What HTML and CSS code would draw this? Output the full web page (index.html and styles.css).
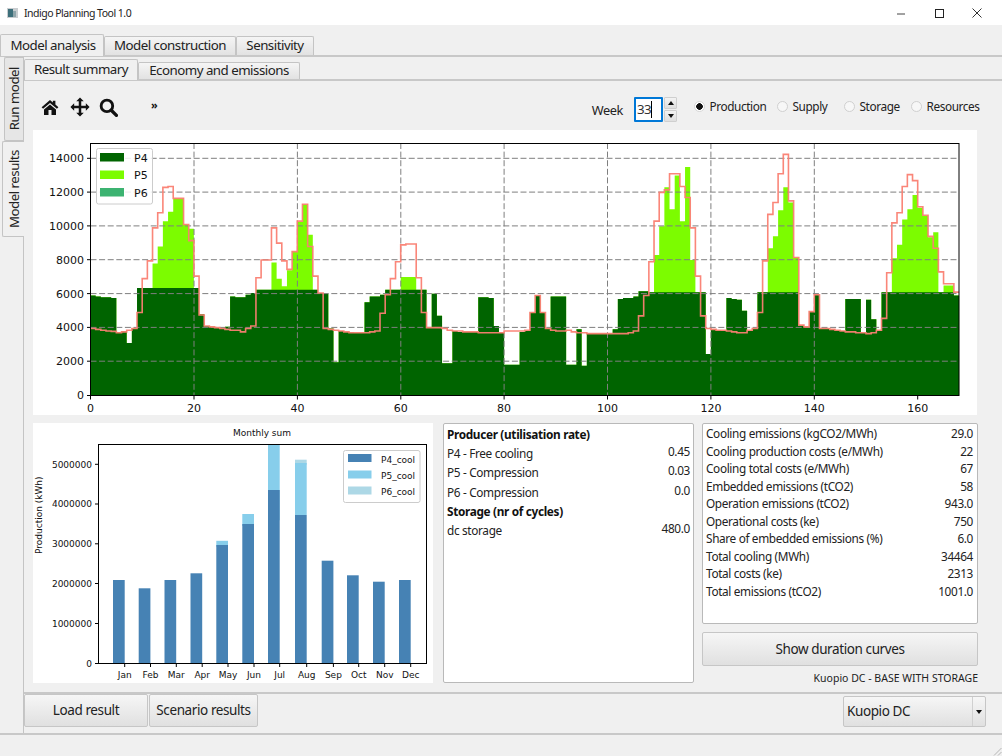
FILE: index.html
```html
<!DOCTYPE html>
<html lang="en">
<head>
<meta charset="utf-8">
<title>Indigo Planning Tool 1.0</title>
<link rel="stylesheet" href="styles.css">
</head>
<body>
<div class="window">
  <header class="titlebar">
    <div class="app-title">
      <svg class="app-icon" width="11" height="10" viewBox="0 0 11 10"><rect width="11" height="10" fill="#c9cdd0"/><rect x="1" y="1" width="5" height="8" fill="#3d6f7a"/><rect x="6" y="3" width="3" height="6" fill="#8fa5aa"/></svg>
      <span>Indigo Planning Tool 1.0</span>
    </div>
    <div class="win-controls">
      <svg width="10" height="10" viewBox="0 0 10 10"><path d="M1 6h8" stroke="#444" fill="none"/></svg>
      <svg width="10" height="10" viewBox="0 0 10 10"><rect x="1.500" y="1.500" width="8" height="8" stroke="#222" fill="none"/></svg>
      <svg width="10" height="10" viewBox="0 0 10 10"><path d="M.5.5l9 9M9.500.5l-9 9" stroke="#333" fill="none"/></svg>
    </div>
  </header>

  <nav class="outer-tabs">
    <div class="tab tab-active tab-outer-first">Model analysis</div>
    <div class="tab tab-construction">Model construction</div>
    <div class="tab tab-sensitivity">Sensitivity</div>
  </nav>

  <div class="outer-pane">
    <nav class="side-tabs">
      <div class="side-tab side-run"><span>Run model</span></div>
      <div class="side-tab side-results"><span>Model results</span></div>
    </nav>
    <div class="side-pane">
      <nav class="inner-tabs">
        <div class="tab tab-active tab-summary">Result summary</div>
        <div class="tab tab-economy">Economy and emissions</div>
      </nav>
      <section class="inner-pane">
        <div class="toolbar">
          <div class="tool-icons">
            <svg class="tool" width="18" height="18" viewBox="0 0 24 24"><path d="M12 2.500 .8 12.200l2 2.100L12 6.500l9.200 7.800 2-2.100-4-3.500V3.500h-3.400v2.400z"/><path d="M4 15.200 12 8.500l8 6.700V22.500h-6v-6.500h-4v6.500H4z"/></svg>
            <svg class="tool tool-move" width="20" height="20" viewBox="0 0 24 24"><path d="M12 .5l4.500 4.500h-3v5.500H19V7.500L23.500 12 19 16.500v-3h-5.500V19h3L12 23.500 7.500 19h3v-5.500H5v3L.5 12 5 7.500v3h5.500V5h-3z"/></svg>
            <svg class="tool tool-search" width="19" height="19" viewBox="0 0 24 24"><circle cx="10" cy="10" r="7.300" fill="none" stroke="#111" stroke-width="3.600"/><path d="M15.500 15.500 22 22" stroke="#111" stroke-width="4.200" stroke-linecap="round"/></svg>
            <span class="more">»</span>
          </div>
          <div class="controls">
            <label class="week-label">Week</label>
            <div class="spin">
              <div class="spin-input">33<i class="caret"></i></div>
              <div class="spin-btns">
                <div class="spin-btn"><i class="arrow-up"></i></div>
                <div class="spin-btn"><i class="arrow-down"></i></div>
              </div>
            </div>
            <div class="radios">
              <div class="radio radio-production"><i class="dot dot-on"></i>Production</div>
              <div class="radio radio-supply"><i class="dot"></i>Supply</div>
              <div class="radio radio-storage"><i class="dot"></i>Storage</div>
              <div class="radio radio-resources"><i class="dot"></i>Resources</div>
            </div>
          </div>
        </div>

        <svg class="chart-main" width="944" height="285" viewBox="33 130 944 285">
          <path id="p5" fill="#7cfc00"/>
          <path id="p4" fill="#006400"/>
          <g class="grid">
            <path d="M90.500 361.200H959M90.500 327.400H959M90.500 293.600H959M90.500 259.700H959M90.500 225.900H959M90.500 192.100H959M90.500 158.300H959"/>
            <path d="M194 143V395M297.400 143V395M400.800 143V395M504.100 143V395M607.500 143V395M710.900 143V395M814.300 143V395"/>
          </g>
          <path id="demand" fill="none" stroke="#fa8072" stroke-width="1.600" stroke-opacity=".95"/>
          <rect x="90.500" y="143.500" width="868.500" height="252" fill="none" stroke="#000"/>
          <path class="ticks" d="M87 395.500h3.500M87 361.200h3.500M87 327.400h3.500M87 293.600h3.500M87 259.700h3.500M87 225.900h3.500M87 192.100h3.500M87 158.300h3.500M90.500 396v3.500M194 396v3.500M297.400 396v3.500M400.800 396v3.500M504.100 396v3.500M607.500 396v3.500M710.900 396v3.500M814.300 396v3.500M917.700 396v3.500"/>
          <g class="tick-y">
            <text x="84" y="399">0</text><text x="84" y="365">2000</text><text x="84" y="331">4000</text><text x="84" y="297.500">6000</text><text x="84" y="263.500">8000</text><text x="84" y="230">10000</text><text x="84" y="196">12000</text><text x="84" y="162">14000</text>
          </g>
          <g class="tick-x">
            <text x="90.500" y="412">0</text><text x="194" y="412">20</text><text x="297.400" y="412">40</text><text x="400.800" y="412">60</text><text x="504.100" y="412">80</text><text x="607.500" y="412">100</text><text x="710.900" y="412">120</text><text x="814.300" y="412">140</text><text x="917.700" y="412">160</text>
          </g>
          <rect x="96.500" y="148.500" width="56" height="55.500" rx="2" fill="#fff" fill-opacity=".85" stroke="#ccc"/>
          <rect x="100" y="153" width="24" height="8.500" fill="#006400"/>
          <rect x="100" y="170.500" width="24" height="8.500" fill="#7cfc00"/>
          <rect x="100" y="188" width="24" height="8.500" fill="#3cb371"/>
          <g class="legend-text"><text x="134" y="161.500">P4</text><text x="134" y="179">P5</text><text x="134" y="196.500">P6</text></g>
        </svg>

        <div class="lower">
          <svg class="chart-month" width="400" height="260" viewBox="33 423 400 260">
            <text class="month-title" x="262" y="436">Monthly sum</text>
            <g fill="#add8e6"><rect x="295" y="459.700" width="11.700" height="5"/></g>
            <g fill="#87ceeb">
              <rect x="216.300" y="540.800" width="11.700" height="6"/><rect x="242.300" y="514" width="11.700" height="12"/><rect x="268" y="444.300" width="11.700" height="76"/><rect x="295" y="463" width="11.700" height="52"/>
            </g>
            <g fill="#4682b4">
              <rect x="113" y="580" width="11.700" height="83.300"/><rect x="138.700" y="588.300" width="11.700" height="75"/><rect x="164.500" y="580" width="11.700" height="83.300"/><rect x="190.500" y="573.300" width="11.700" height="90"/><rect x="216.300" y="545" width="11.700" height="118.300"/><rect x="242.300" y="524" width="11.700" height="139.300"/><rect x="268" y="490" width="11.700" height="173.300"/><rect x="295" y="515" width="11.700" height="148.300"/><rect x="321.700" y="560.700" width="11.700" height="102.600"/><rect x="347" y="575.300" width="11.700" height="88"/><rect x="373" y="581.700" width="11.700" height="81.600"/><rect x="399" y="580" width="11.700" height="83.300"/>
            </g>
            <rect x="98.500" y="444.500" width="328" height="219" fill="none" stroke="#000"/>
            <path class="ticks" d="M95 663.500h3.500M95 623.500h3.500M95 583.500h3.500M95 543.800h3.500M95 504h3.500M95 464.300h3.500M124.700 664v3M150.500 664v3M176.300 664v3M202.200 664v3M228 664v3M254 664v3M279.700 664v3M306.700 664v3M333.400 664v3M358.700 664v3M384.700 664v3M410.700 664v3"/>
            <g class="month-y">
              <text x="92" y="666.500">0</text><text x="92" y="626.500">1000000</text><text x="92" y="586.500">2000000</text><text x="92" y="547">3000000</text><text x="92" y="507">4000000</text><text x="92" y="467.500">5000000</text>
            </g>
            <text class="month-ylabel" transform="translate(42 554) rotate(-90)">Production (kWh)</text>
            <g class="month-x">
              <text x="124.700" y="678">Jan</text><text x="150.500" y="678">Feb</text><text x="176.300" y="678">Mar</text><text x="202.200" y="678">Apr</text><text x="228" y="678">May</text><text x="254" y="678">Jun</text><text x="279.700" y="678">Jul</text><text x="306.700" y="678">Aug</text><text x="333.400" y="678">Sep</text><text x="358.700" y="678">Oct</text><text x="384.700" y="678">Nov</text><text x="410.700" y="678">Dec</text>
            </g>
            <rect x="343.500" y="450.500" width="76.500" height="52" rx="2" fill="#fff" stroke="#ccc"/>
            <rect x="348" y="454" width="23.500" height="8" fill="#4682b4"/>
            <rect x="348" y="470.500" width="23.500" height="8" fill="#87ceeb"/>
            <rect x="348" y="486.500" width="23.500" height="8" fill="#add8e6"/>
            <g class="month-legend"><text x="381" y="463">P4_cool</text><text x="381" y="479">P5_cool</text><text x="381" y="495">P6_cool</text></g>
          </svg>

          <div class="panel panel-producers">
            <div class="prod-row"><b>Producer (utilisation rate)</b></div>
            <div class="prod-row"><span>P4 - Free cooling</span><span class="val">0.45</span></div>
            <div class="prod-row"><span>P5 - Compression</span><span class="val">0.03</span></div>
            <div class="prod-row"><span>P6 - Compression</span><span class="val">0.0</span></div>
            <div class="prod-row"><b>Storage (nr of cycles)</b></div>
            <div class="prod-row"><span>dc storage</span><span class="val">480.0</span></div>
          </div>

          <div class="right-col">
            <div class="panel panel-kpi">
              <div class="kpi-row"><span>Cooling emissions (kgCO2/MWh)</span><span>29.0</span></div>
              <div class="kpi-row"><span>Cooling production costs (e/MWh)</span><span>22</span></div>
              <div class="kpi-row"><span>Cooling total costs (e/MWh)</span><span>67</span></div>
              <div class="kpi-row"><span>Embedded emissions (tCO2)</span><span>58</span></div>
              <div class="kpi-row"><span>Operation emissions (tCO2)</span><span>943.0</span></div>
              <div class="kpi-row"><span>Operational costs (ke)</span><span>750</span></div>
              <div class="kpi-row"><span>Share of embedded emissions (%)</span><span>6.0</span></div>
              <div class="kpi-row"><span>Total cooling (MWh)</span><span>34464</span></div>
              <div class="kpi-row"><span>Total costs (ke)</span><span>2313</span></div>
              <div class="kpi-row"><span>Total emissions (tCO2)</span><span>1001.0</span></div>
            </div>
            <button class="btn btn-curves">Show duration curves</button>
            <div class="scenario-label">Kuopio DC - BASE WITH STORAGE</div>
          </div>
        </div>
      </section>

      <div class="bottom-bar">
        <div class="bottom-left">
          <button class="btn btn-load">Load result</button>
          <button class="btn btn-scenario">Scenario results</button>
        </div>
        <div class="combo">
          <span class="combo-text">Kuopio DC</span>
          <span class="combo-arrow"><i class="arrow-down"></i></span>
        </div>
      </div>
    </div>
  </div>
  <footer class="statusbar">
    <svg width="10" height="10" viewBox="0 0 10 10"><path d="M9.500 2 2 9.500M9.500 6 6 9.500" stroke="#b5b5b5" fill="none"/></svg>
  </footer>
</div>
<script src="chart.js"></script>
</body>
</html>
```
FILE: styles.css
```css
* { box-sizing: border-box; }
html, body { margin: 0; padding: 0; }
body {
  width: 1002px;
  height: 756px;
  overflow: hidden;
  background: #f0f0f0;
  color: #1a1a1a;
  font-family: "Noto Sans", Lato, sans-serif;
  font-size: 11.800px;
}
.window { display: flex; flex-direction: column; width: 1002px; height: 756px; }

/* title bar */
.titlebar { height: 25px; flex: none; background: #fff; display: flex; justify-content: space-between; align-items: center; }
.app-title { display: flex; align-items: center; gap: 6px; padding-left: 7px; font-size: 10.500px; letter-spacing: -.5px; color: #222; }
.win-controls { display: flex; gap: 28px; padding-right: 11px; width: 106px; }

/* tabs */
.tab {
  display: flex; align-items: center; justify-content: center;
  border: 1px solid #c4c4c4; border-bottom: none;
  background: linear-gradient(#f5f5f5, #e2e2e2);
  border-radius: 2px 2px 0 0;
  font-size: 13.300px; letter-spacing: -.5px; color: #222; padding-bottom: 2px;
}
.tab-active { background: #f0f0f0; position: relative; }
.outer-tabs { height: 30px; flex: none; display: flex; align-items: flex-end; }
.outer-tabs .tab { height: 19px; margin-bottom: 0; }
.outer-tabs .tab-outer-first { height: 22px; width: 104px; margin-bottom: -1px; z-index: 2; padding-left: 2px; }
.tab-construction { width: 132px; }
.tab-sensitivity { width: 78px; }

.outer-pane {
  height: 680px; flex: none; display: flex;
  border-top: 2px solid #c8c8c8; border-bottom: 2px solid #c8c8c8;
}
.side-tabs { width: 23px; flex: none; display: flex; flex-direction: column; align-items: flex-end; }
.side-tab {
  display: flex; align-items: center; justify-content: center;
  border: 1px solid #c4c4c4; border-right: none;
  border-radius: 2px 0 0 2px;
  background: #e6e6e6;
}
.side-tab span { writing-mode: vertical-rl; transform: rotate(180deg); font-size: 13.300px; letter-spacing: -.5px; color: #222; }
.side-run { height: 84px; width: 19px; }
.side-results { height: 96px; width: 22px; background: #f0f0f0; margin-right: -1px; position: relative; }

.side-pane { flex: 1; min-width: 0; display: flex; flex-direction: column; border-left: 1px solid #c4c4c4; }
.inner-tabs { height: 22px; flex: none; display: flex; align-items: flex-end; padding-top: 2px; }
.inner-tabs .tab { height: 17px; }
.inner-tabs .tab-summary { height: 21px; width: 114px; margin-bottom: -1px; z-index: 2; }
.tab-economy { width: 162px; }

.inner-pane {
  height: 615px; flex: none;
  border-top: 2px solid #c8c8c8; border-bottom: 2px solid #c8c8c8;
}
.toolbar { height: 49px; display: flex; justify-content: space-between; align-items: flex-start; padding: 16px 20px 0 17px; }
.tool-icons { display: flex; align-items: center; gap: 9px; }
.tool { fill: #111; display: block; }
.tool-move { margin-left: 2px; }
.more { font-size: 11px; font-weight: 700; margin-left: 24px; line-height: 14px; margin-top: -4px; color: #111; }
.controls { display: flex; align-items: flex-start; }
.week-label { font-size: 12.800px; letter-spacing: -.4px; line-height: 20px; margin-top: 3px; margin-right: 11px; color: #222; }
.spin { display: flex; height: 25px; }
.spin-input {
  width: 29px; height: 25px; border: 2px solid #0078d7; background: #fff; border-radius: 1px;
  font-size: 13.300px; letter-spacing: -.5px; line-height: 21px; padding-left: 1px; color: #333;
}
.caret { display: inline-block; width: 1px; height: 17px; background: #000; vertical-align: -4px; }
.spin-btns { width: 13px; display: flex; flex-direction: column; gap: 1px; margin-left: 1px; }
.spin-btn { flex: 1; display: flex; align-items: center; justify-content: center; background: linear-gradient(#f3f3f3, #dfdfdf); border: 1px solid #cfcfcf; border-radius: 1px; }
.arrow-up, .arrow-down { width: 0; height: 0; border-left: 3px solid transparent; border-right: 3px solid transparent; display: block; }
.arrow-up { border-bottom: 4px solid #111; }
.arrow-down { border-top: 4px solid #111; }
.radios { display: flex; margin-left: 16.500px; margin-top: 0; }
.radio { display: flex; align-items: center; font-size: 11.800px; letter-spacing: -.4px; line-height: 18px; color: #222; }
.radio-production { width: 83px; }
.radio-supply { width: 67px; }
.radio-storage { width: 67px; }
.radio-resources { width: 71.500px; }
.dot {
  width: 11px; height: 11px; border-radius: 50%; margin-right: 5px;
  border: 1px solid #d0d0d0; background: #f7f7f7; display: block; flex: none;
}
.dot-on { background: radial-gradient(circle, #111 0 3px, #fff 3.600px); border-color: #d8d8d8; }

/* charts */
.chart-main, .chart-month { display: block; background: #fff; }
.chart-main { margin-left: 9px; }
.grid path { stroke: #7f7f7f; stroke-dasharray: 6 2.600; fill: none; }
.ticks { stroke: #000; fill: none; }
.tick-y text { font: 11px "DejaVu Sans", sans-serif; text-anchor: end; fill: #111; }
.tick-x text { font: 11px "DejaVu Sans", sans-serif; text-anchor: middle; fill: #111; }
.legend-text text { font: 11px "DejaVu Sans", sans-serif; fill: #111; }
.month-title { font: 9px "DejaVu Sans", sans-serif; text-anchor: middle; fill: #111; }
.month-y text { font: 9px "DejaVu Sans", sans-serif; text-anchor: end; fill: #111; }
.month-x text { font: 9px "DejaVu Sans", sans-serif; text-anchor: middle; fill: #111; }
.month-legend text { font: 9px "DejaVu Sans", sans-serif; fill: #111; }
.month-ylabel { font: 9px "DejaVu Sans", sans-serif; fill: #111; }

/* lower row */
.lower { display: flex; margin-top: 8px; margin-left: 9px; }
.panel { background: #fff; border: 1px solid #b9b9b9; border-radius: 2px; }
.panel-producers { width: 251px; height: 260px; margin-left: 10px; padding: 1px 3px 0; }
.prod-row { display: flex; justify-content: space-between; height: 19.200px; font-size: 11.800px; letter-spacing: -.33px; line-height: 19px; color: #222; }
.prod-row b { color: #111; }
.val { position: relative; top: -2px; }
.right-col { width: 276px; margin-left: 8px; display: flex; flex-direction: column; }
.panel-kpi { width: 276px; height: 201px; padding: 1px 4px 0 3px; }
.kpi-row { display: flex; justify-content: space-between; height: 17.550px; font-size: 11.800px; letter-spacing: -.35px; line-height: 17px; color: #222; }
.btn {
  font-family: inherit; font-size: 13.500px; letter-spacing: -.4px; color: #222;
  background: linear-gradient(#f6f6f6, #e0e0e0);
  border: 1px solid #c6c6c6; border-radius: 2px; padding: 0 0 1px;
}
.btn-curves { height: 34px; margin-top: 8px; }
.scenario-label { font-size: 10.500px; line-height: 14px; margin-top: 5px; text-align: right; color: #222; }

/* bottom */
.bottom-bar { flex: 1; display: flex; justify-content: space-between; align-items: flex-start; padding: 0 16px 0 0; }
.bottom-left { display: flex; gap: 1px; }
.btn-load { width: 124px; height: 33px; }
.btn-scenario { width: 109px; height: 33px; }
.combo { width: 143px; height: 31px; margin-top: 2px; display: flex; background: linear-gradient(#f6f6f6, #e0e0e0); border: 1px solid #c6c6c6; border-radius: 2px; }
.combo-text { flex: 1; font-size: 13.500px; letter-spacing: -.4px; line-height: 29px; padding-left: 3px; color: #222; }
.combo-arrow { width: 13px; border-left: 1px solid #d0d0d0; display: flex; align-items: center; justify-content: center; }
.statusbar { flex: 1; display: flex; justify-content: flex-end; align-items: flex-end; }
```
FILE: chart.js
```js
function rep(v, n) { return Array(n).fill(v); }
var p4 = [].concat(
  [5900,5850,5800,5800,5750,3750,3800,3100,3950], rep(6350,12),
  [4800,4100,4050,4000,4000,4050,5850,5800,5800,5950,6050], rep(6250,12),
  [6050,6000,3950,1950,3800,3750,3750,3700,3700,5500,5850,5850,5950], rep(6250,8),
  [4000,6000,4700,1900,1900,3800,3750,3750,3750,3750,5800,5800,5750,4100,3700,1800,1800,1800,
   3750,3800,4900,5900,4900,3950,5850,5850,5850,1800,1800,3900,1750], rep(3650,5),
  [3900,5700,5750,5750,5850,6150,6150], rep(6100,11),
  [2450,3900,3850,3800,5750,5700,5650,5000,3800,3950], rep(6100,8),
  [4150,4050,4950,5950,3950,3950,3900,3850,3800,5700,5700,5700,3700,5650,4500,3800], rep(6100,14), [5900]
);
var top5 = {12:7800,13:8800,14:10300,15:10850,16:11650,17:11650,18:10100,19:9850,
  35:7850,36:6900,37:6450,38:7400,39:8500,40:10250,41:11300,42:9500,60:7000,61:7000,62:7000,
  109:8300,110:10000,111:12300,112:11000,113:13000,114:10300,115:13500,116:8000,
  131:8700,132:9400,133:10950,134:12300,135:11400,136:8150,
  155:8100,156:8900,157:10400,158:11000,159:11850,160:11100,161:10600,162:9350,163:9650,165:6500,166:6500};
var demand = [3950,3900,3850,3800,3780,3700,3750,3850,3950,4900,
  6900,7950,9900,10800,12300,12350,11650,11650,10100,9150,
  7050,4750,4100,4050,4000,3950,3900,3850,3850,3750,
  3950,4100,6950,8000,8000,9900,9000,7950,7450,8500,
  10300,11300,8800,7050,6050,3950,3900,3850,3800,3750,
  3700,3700,3700,3700,3750,3800,4850,5950,6900,7900,
  8900,8950,8950,6950,4900,4000,4000,4000,3950,3850,
  3800,3800,3750,3750,3750,3700,3700,3700,3700,3700,
  3800,3800,3800,3800,3850,4900,5900,4900,3950,3850,
  3800,3800,3850,3750,3700,3700,3650,3650,3650,3650,
  3650,3650,3650,3650,3700,3800,4700,5900,7900,10300,
  12000,12150,13100,13100,12350,11700,9900,7050,4700,3950,
  3900,3850,3850,3800,3750,3700,3700,3850,3950,4900,
  7950,10700,11400,13100,14250,11500,8150,4150,4050,4950,
  5950,3950,3950,3900,3850,3800,3750,3750,3700,3700,
  3650,3700,3850,4550,7250,10200,10800,12350,13050,12700,
  11150,10650,9400,8700,7300,6600,6600,6100];
function X(h) { return (90.5 + h * 5.17).toFixed(2); }
function Y(v) { return (395.3 - v * 0.016907).toFixed(2); }
function steps(vals) {
  var d = "M" + X(0) + " " + Y(vals[0]);
  for (var i = 0; i < 168; i++) { d += "V" + Y(vals[i]) + "H" + X(i + 1); }
  return d;
}
var greens = p4.map(function (v, i) { return top5[i] || v; });
document.getElementById("p4").setAttribute("d", steps(p4) + "V" + Y(0) + "H" + X(0) + "Z");
document.getElementById("p5").setAttribute("d", steps(greens) + "V" + Y(0) + "H" + X(0) + "Z");
document.getElementById("demand").setAttribute("d", steps(demand));
```
